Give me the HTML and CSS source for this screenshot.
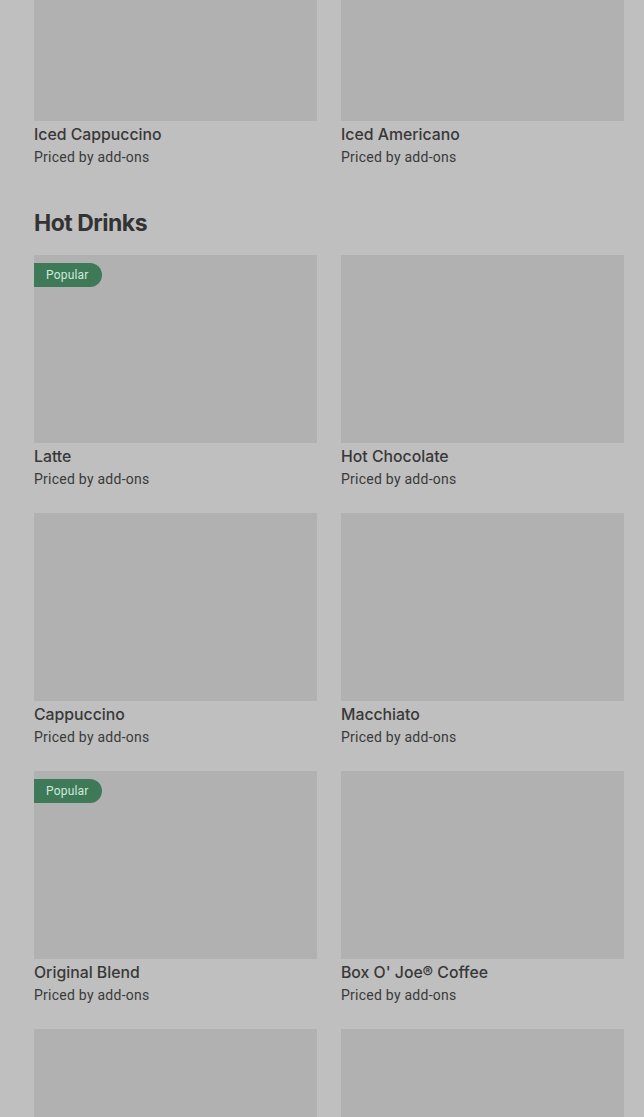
FILE: index.html
```html
<!DOCTYPE html>
<html lang="en">
<head>
    <meta charset="UTF-8">
    <meta name="viewport" content="width=device-width, initial-scale=1.0">
    <title>Menu</title>
    <link rel="stylesheet" href="styles.css">
</head>
<body>

<div class="menu">
    <div class="grid first-grid">
        <div class="item">
            <div class="thumb"></div>
            <div class="name">Iced Cappuccino</div>
            <div class="price">Priced by add-ons</div>
        </div>
        <div class="item">
            <div class="thumb"></div>
            <div class="name">Iced Americano</div>
            <div class="price">Priced by add-ons</div>
        </div>
    </div>

    <h2 class="section-title">Hot Drinks</h2>

    <div class="grid">
        <div class="item">
            <div class="thumb"><span class="badge">Popular</span></div>
            <div class="name">Latte</div>
            <div class="price">Priced by add-ons</div>
        </div>
        <div class="item">
            <div class="thumb"></div>
            <div class="name">Hot Chocolate</div>
            <div class="price">Priced by add-ons</div>
        </div>
        <div class="item">
            <div class="thumb"></div>
            <div class="name">Cappuccino</div>
            <div class="price">Priced by add-ons</div>
        </div>
        <div class="item">
            <div class="thumb"></div>
            <div class="name">Macchiato</div>
            <div class="price">Priced by add-ons</div>
        </div>
        <div class="item">
            <div class="thumb"><span class="badge">Popular</span></div>
            <div class="name">Original Blend</div>
            <div class="price">Priced by add-ons</div>
        </div>
        <div class="item">
            <div class="thumb"></div>
            <div class="name">Box O' Joe® Coffee</div>
            <div class="price">Priced by add-ons</div>
        </div>
        <div class="item">
            <div class="thumb"></div>
        </div>
        <div class="item">
            <div class="thumb"></div>
        </div>
    </div>
</div>

</body>
</html>
```

FILE: styles.css
```css
* {
    margin: 0;
    padding: 0;
    box-sizing: border-box;
}

body {
    background-color: #bfbfbf;
    color: #363636;
    font-family: 'Inter', 'Roboto', sans-serif;
    overflow: hidden;
    height: 1117px;
}

.menu {
    padding: 0 20px 0 34px;
    margin-top: -67px;
}

.grid {
    display: grid;
    grid-template-columns: 283px 283px;
    column-gap: 24px;
    row-gap: 24px;
}

.item {
    display: flex;
    flex-direction: column;
}

.thumb {
    height: 188px;
    background-color: #b1b1b1;
    position: relative;
}

/* badge sits over the picture */
.badge {
    position: absolute;
    top: 8px;
    left: 0;
    height: 24px;
    width: 68px;
    padding-left: 12px;
    line-height: 24px;
    font-family: 'Roboto', sans-serif;
    font-size: 12px;
    letter-spacing: 0.2px;
    color: #cfe9d8;
    background-color: #3e7a58;
    border-radius: 0 12px 12px 0;
}

.name {
    margin-top: 3px;
    font-family: 'Inter', sans-serif;
    font-size: 15.8px;
    font-weight: 500;
    line-height: 22px;
    color: #383838;
}

.price {
    margin-top: 1px;
    font-family: 'Roboto', sans-serif;
    font-size: 14px;
    letter-spacing: 0.25px;
    line-height: 20px;
    color: #3a3a3a;
}

.section-title {
    margin: 40px 0 16px;
    font-family: 'Inter', sans-serif;
    font-size: 23px;
    font-weight: 700;
    line-height: 32px;
    letter-spacing: -0.5px;
    color: #333333;
}
```
